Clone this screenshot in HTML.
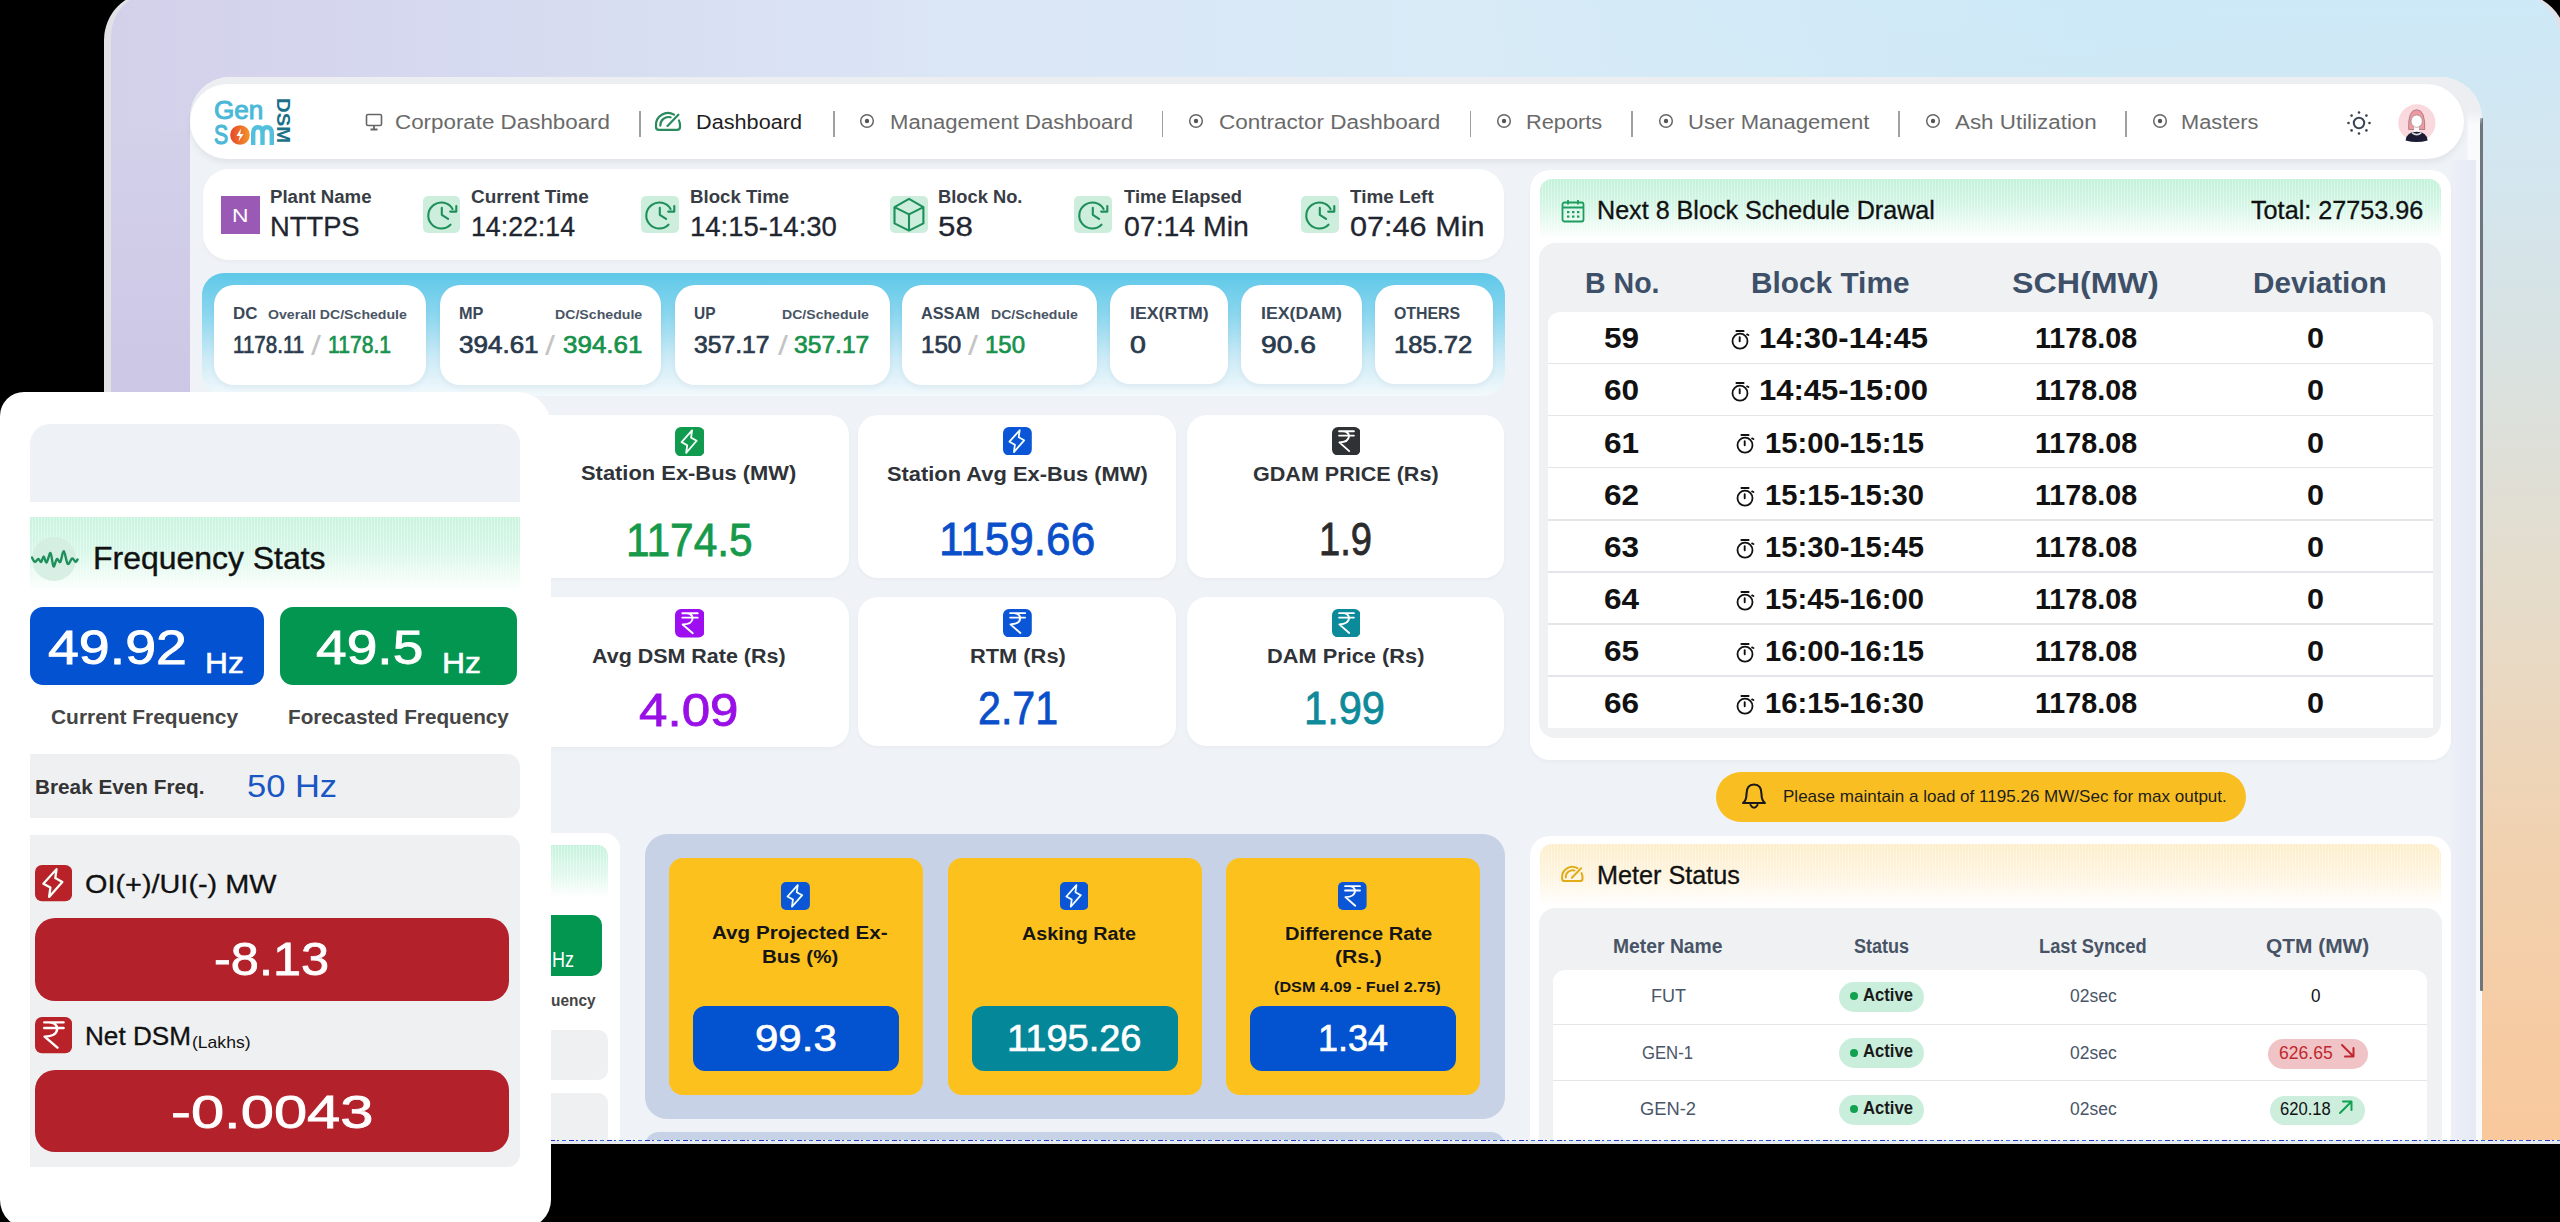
<!DOCTYPE html>
<html><head><meta charset="utf-8"><title>GenSom DSM Dashboard</title>
<style>
html,body{margin:0;padding:0;width:2560px;height:1222px;overflow:hidden;background:#000;font-family:'Liberation Sans', sans-serif;}
#root{position:relative;width:2560px;height:1222px;overflow:hidden;background:#000;}
</style></head><body><div id="root">
<div style="position:absolute;left:104px;top:-8px;width:2464px;height:1151px;border-radius:48px 54px 0 0;background:#e2e2e6;"></div>
<div style="position:absolute;left:111px;top:-8px;width:2450px;height:1151px;border-radius:44px 50px 0 0;background:linear-gradient(180deg,#cde9f8 0%,#d3e6ef 15%,#d8e2e2 30%,#e5dccb 52%,#f1d1af 75%,#f9c89c 100%);"></div>
<div style="position:absolute;left:111px;top:-8px;width:2450px;height:140px;border-radius:44px 50px 0 0;background:linear-gradient(90deg,#d3d0ea 0%,#d6daf0 15%,#dbe6f6 35%,#d8ebf7 55%,rgba(205,233,248,0.6) 80%,rgba(205,233,248,0) 100%);"></div>
<div style="position:absolute;left:111px;top:130px;width:79px;height:272px;background:linear-gradient(180deg,#d3d0ea 0%,#d0cce8 50%,#cbc7e4 100%);"></div>
<div style="position:absolute;left:190px;top:77px;width:2292px;height:1066px;border-radius:40px 42px 0 0;background:linear-gradient(90deg,#eff3f7 0%,#eff3f7 99.35%,#f8fafc 99.4%,#f8fafc 100%);"></div>
<div style="position:absolute;left:2480.0px;top:118.0px;width:2.5px;height:873.0px;background:#6f757c;border-radius:1px;"></div>
<div style="position:absolute;left:2451px;top:160px;width:25px;height:983px;background:linear-gradient(90deg,#edf0f7,#e6eaf5);"></div>
<div style="position:absolute;left:190px;top:77px;width:2292px;height:48px;border-radius:40px 42px 0 0;background:linear-gradient(180deg,#eceef1 0%,#eceef1 70%,rgba(236,238,241,0) 100%);"></div>
<div style="position:absolute;left:190px;top:84px;width:2274px;height:75px;border-radius:38px;background:#fff;box-shadow:0 4px 6px rgba(0,0,0,0.06);"></div>
<div style="position:absolute;left:213.8px;top:96.8px;white-space:nowrap;font-size:26px;line-height:26px;font-weight:400;color:#4bb8d8;transform:scaleX(1.0050);transform-origin:0 0;-webkit-text-stroke:1.0px #4bb8d8;">Gen</div>
<div style="position:absolute;left:213.8px;top:121.1px;white-space:nowrap;font-size:28px;line-height:28px;font-weight:400;color:#4bb8d8;transform:scaleX(0.7599);transform-origin:0 0;-webkit-text-stroke:1.2px #4bb8d8;">S</div>
<svg style="position:absolute;left:230.0px;top:125.0px;" width="20" height="20" viewBox="0 0 20 20"><defs><linearGradient id="lg1" x1="0" x2="1"><stop offset="0" stop-color="#e8452c"/><stop offset="1" stop-color="#f2962a"/></linearGradient></defs><circle cx="10" cy="10" r="9.8" fill="url(#lg1)"/><path d="M11 3.5 L6.5 11 L9.8 11 L8.5 16.5 L13.5 9 L10.2 9 Z" fill="#fff"/></svg>
<svg style="position:absolute;left:251.0px;top:125.0px;" width="23" height="20" viewBox="0 0 23 20"><path d="M2.2 20 V8.5 Q2.2 2.2 7.2 2.2 Q11.5 2.2 11.5 8.5 V20 M11.5 8.5 Q11.5 2.2 16 2.2 Q20.8 2.2 20.8 8.5 V20" fill="none" stroke="#52bfdc" stroke-width="4.4"/></svg>
<div style="position:absolute;left:275px;top:98px;width:16px;height:47px;writing-mode:vertical-rl;font-size:19px;line-height:16px;font-weight:700;color:#1a7089;letter-spacing:0px;transform:scaleY(1.07);transform-origin:0 0;">DSM</div>
<svg style="position:absolute;left:365.0px;top:113.0px;" width="18" height="19" viewBox="0 0 18 19"><rect x="1.5" y="1.5" width="15" height="11" rx="1.5" fill="none" stroke="#666" stroke-width="1.6"/><path d="M9 12.5 V16 M5.5 16.5 H12.5" stroke="#666" stroke-width="1.8"/></svg>
<div style="position:absolute;left:395.0px;top:111.8px;white-space:nowrap;font-size:20px;line-height:20px;font-weight:400;color:#6a6a6a;transform:scaleX(1.1178);transform-origin:0 0;">Corporate Dashboard</div>
<div style="position:absolute;left:639.2px;top:110.6px;width:1.5px;height:26.9px;background:#a0a0a0;border-radius:0px;"></div>
<svg style="position:absolute;left:650.0px;top:105.0px;" width="36" height="30" viewBox="0 0 36 30"><path d="M24 9.6 A12 12 0 0 0 6 20.5 V22 Q6 24.8 9 24.8 H27 Q30 24.8 30 22 V20.5 A12 12 0 0 0 28.9 15.4" fill="none" stroke="#2a8a5e" stroke-width="2.2" stroke-linecap="round" stroke-linejoin="round"/><path d="M20.6 12.3 A8.2 8.2 0 0 0 10.3 20.6" fill="none" stroke="#2a8a5e" stroke-width="2.2" stroke-linecap="round"/><path d="M17.5 20.9 L28.4 9.7" stroke="#2a8a5e" stroke-width="2.2" stroke-linecap="round"/></svg>
<div style="position:absolute;left:696.0px;top:111.8px;white-space:nowrap;font-size:20px;line-height:20px;font-weight:400;color:#1f1f1f;transform:scaleX(1.0834);transform-origin:0 0;">Dashboard</div>
<div style="position:absolute;left:833.0px;top:110.6px;width:1.5px;height:26.9px;background:#a0a0a0;border-radius:0px;"></div>
<svg style="position:absolute;left:859.0px;top:113.2px;" width="16" height="16" viewBox="0 0 16 16"><circle cx="8" cy="8" r="6.3" fill="none" stroke="#666" stroke-width="1.5"/><circle cx="8" cy="8" r="2.2" fill="#555"/></svg>
<div style="position:absolute;left:889.5px;top:111.8px;white-space:nowrap;font-size:20px;line-height:20px;font-weight:400;color:#6a6a6a;transform:scaleX(1.1038);transform-origin:0 0;">Management Dashboard</div>
<div style="position:absolute;left:1161.8px;top:110.6px;width:1.5px;height:26.9px;background:#a0a0a0;border-radius:0px;"></div>
<svg style="position:absolute;left:1188.0px;top:113.2px;" width="16" height="16" viewBox="0 0 16 16"><circle cx="8" cy="8" r="6.3" fill="none" stroke="#666" stroke-width="1.5"/><circle cx="8" cy="8" r="2.2" fill="#555"/></svg>
<div style="position:absolute;left:1218.8px;top:111.8px;white-space:nowrap;font-size:20px;line-height:20px;font-weight:400;color:#6a6a6a;transform:scaleX(1.1243);transform-origin:0 0;">Contractor Dashboard</div>
<div style="position:absolute;left:1469.8px;top:110.6px;width:1.5px;height:26.9px;background:#a0a0a0;border-radius:0px;"></div>
<svg style="position:absolute;left:1495.8px;top:113.2px;" width="16" height="16" viewBox="0 0 16 16"><circle cx="8" cy="8" r="6.3" fill="none" stroke="#666" stroke-width="1.5"/><circle cx="8" cy="8" r="2.2" fill="#555"/></svg>
<div style="position:absolute;left:1526.2px;top:111.8px;white-space:nowrap;font-size:20px;line-height:20px;font-weight:400;color:#6a6a6a;transform:scaleX(1.0888);transform-origin:0 0;">Reports</div>
<div style="position:absolute;left:1631.2px;top:110.6px;width:1.5px;height:26.9px;background:#a0a0a0;border-radius:0px;"></div>
<svg style="position:absolute;left:1658.0px;top:113.2px;" width="16" height="16" viewBox="0 0 16 16"><circle cx="8" cy="8" r="6.3" fill="none" stroke="#666" stroke-width="1.5"/><circle cx="8" cy="8" r="2.2" fill="#555"/></svg>
<div style="position:absolute;left:1688.0px;top:111.8px;white-space:nowrap;font-size:20px;line-height:20px;font-weight:400;color:#6a6a6a;transform:scaleX(1.1025);transform-origin:0 0;">User Management</div>
<div style="position:absolute;left:1898.0px;top:110.6px;width:1.5px;height:26.9px;background:#a0a0a0;border-radius:0px;"></div>
<svg style="position:absolute;left:1924.5px;top:113.2px;" width="16" height="16" viewBox="0 0 16 16"><circle cx="8" cy="8" r="6.3" fill="none" stroke="#666" stroke-width="1.5"/><circle cx="8" cy="8" r="2.2" fill="#555"/></svg>
<div style="position:absolute;left:1954.5px;top:111.8px;white-space:nowrap;font-size:20px;line-height:20px;font-weight:400;color:#6a6a6a;transform:scaleX(1.1186);transform-origin:0 0;">Ash Utilization</div>
<div style="position:absolute;left:2125.0px;top:110.6px;width:1.5px;height:26.9px;background:#a0a0a0;border-radius:0px;"></div>
<svg style="position:absolute;left:2151.5px;top:113.2px;" width="16" height="16" viewBox="0 0 16 16"><circle cx="8" cy="8" r="6.3" fill="none" stroke="#666" stroke-width="1.5"/><circle cx="8" cy="8" r="2.2" fill="#555"/></svg>
<div style="position:absolute;left:2181.2px;top:111.8px;white-space:nowrap;font-size:20px;line-height:20px;font-weight:400;color:#6a6a6a;transform:scaleX(1.0896);transform-origin:0 0;">Masters</div>
<svg style="position:absolute;left:2345.5px;top:109.5px;" width="26" height="26" viewBox="0 0 26 26"><circle cx="13" cy="13" r="5.2" fill="none" stroke="#3a4452" stroke-width="2"/><circle cx="23.50" cy="13.00" r="1.3" fill="#3a4452"/><circle cx="20.42" cy="20.42" r="1.3" fill="#3a4452"/><circle cx="13.00" cy="23.50" r="1.3" fill="#3a4452"/><circle cx="5.58" cy="20.42" r="1.3" fill="#3a4452"/><circle cx="2.50" cy="13.00" r="1.3" fill="#3a4452"/><circle cx="5.58" cy="5.58" r="1.3" fill="#3a4452"/><circle cx="13.00" cy="2.50" r="1.3" fill="#3a4452"/><circle cx="20.42" cy="5.58" r="1.3" fill="#3a4452"/></svg>
<svg style="position:absolute;left:2398.0px;top:103.5px;" width="38" height="38" viewBox="0 0 38 38"><circle cx="18.9" cy="18.9" r="18.6" fill="#f9d9dd"/><path d="M10.6 25.5 Q9.8 5.7 18.7 5.7 Q27.4 5.7 26.8 25.5 Z" fill="#ec9aa2" stroke="#7a4a55" stroke-width="0.5"/><rect x="16.1" y="22" width="4.9" height="7" fill="#fff"/><ellipse cx="18.7" cy="17.2" rx="5.6" ry="6.2" fill="#fdfdfd" stroke="#555" stroke-width="0.4"/><path d="M7.6 36.5 Q8.6 27.8 18.7 27.8 Q28.8 27.8 29.6 36.5 Q18.7 39.5 7.6 36.5 Z" fill="#1d1b33"/><path d="M14 28.6 Q18.7 32.6 23.4 28.6" fill="none" stroke="#d3dad8" stroke-width="1.6"/></svg>
<div style="position:absolute;left:202.6px;top:169.3px;width:1301px;height:91px;border-radius:26px;background:#fff;box-shadow:0 2px 4px rgba(0,0,0,0.03);"></div>
<div style="position:absolute;left:221.0px;top:195.6px;width:38.5px;height:38.1px;background:#9b59b6;border-radius:0px;"></div>
<div style="position:absolute;left:231.5px;top:205.9px;white-space:nowrap;font-size:19px;line-height:19px;font-weight:400;color:#fff;transform:scaleX(1.2014);transform-origin:0 0;">N</div>
<div style="position:absolute;left:269.7px;top:188.4px;white-space:nowrap;font-size:18px;line-height:18px;font-weight:700;color:#383d45;transform:scaleX(1.0362);transform-origin:0 0;">Plant Name</div>
<div style="position:absolute;left:269.7px;top:212.7px;white-space:nowrap;font-size:28px;line-height:28px;font-weight:400;color:#1f2630;transform:scaleX(0.9762);transform-origin:0 0;-webkit-text-stroke:0.3px #1f2630;">NTTPS</div>
<div style="position:absolute;left:422.7px;top:195.7px;width:37.8px;height:37.7px;background:#cdeedd;border-radius:5px;"></div>
<svg style="position:absolute;left:422.7px;top:195.7px;" width="38" height="38" viewBox="0 0 38 38"><path d="M29.56 13 A13 13 0 1 0 27.5 28.7" fill="none" stroke="#1e8f5a" stroke-width="2.1" stroke-linecap="round"/><path d="M33.3 10 V15.6 H27.2" fill="none" stroke="#1e8f5a" stroke-width="2.1" stroke-linecap="round" stroke-linejoin="round"/><path d="M18.8 11.9 V18.8 L25.1 22.9" fill="none" stroke="#1e8f5a" stroke-width="2.1" stroke-linecap="round" stroke-linejoin="round"/></svg>
<div style="position:absolute;left:471.2px;top:188.4px;white-space:nowrap;font-size:18px;line-height:18px;font-weight:700;color:#383d45;transform:scaleX(1.0537);transform-origin:0 0;">Current Time</div>
<div style="position:absolute;left:471.2px;top:212.7px;white-space:nowrap;font-size:28px;line-height:28px;font-weight:400;color:#1f2630;transform:scaleX(0.9541);transform-origin:0 0;-webkit-text-stroke:0.3px #1f2630;">14:22:14</div>
<div style="position:absolute;left:641.3px;top:195.7px;width:37.8px;height:37.7px;background:#cdeedd;border-radius:5px;"></div>
<svg style="position:absolute;left:641.3px;top:195.7px;" width="38" height="38" viewBox="0 0 38 38"><path d="M29.56 13 A13 13 0 1 0 27.5 28.7" fill="none" stroke="#1e8f5a" stroke-width="2.1" stroke-linecap="round"/><path d="M33.3 10 V15.6 H27.2" fill="none" stroke="#1e8f5a" stroke-width="2.1" stroke-linecap="round" stroke-linejoin="round"/><path d="M18.8 11.9 V18.8 L25.1 22.9" fill="none" stroke="#1e8f5a" stroke-width="2.1" stroke-linecap="round" stroke-linejoin="round"/></svg>
<div style="position:absolute;left:689.5px;top:188.4px;white-space:nowrap;font-size:18px;line-height:18px;font-weight:700;color:#383d45;transform:scaleX(1.0353);transform-origin:0 0;">Block Time</div>
<div style="position:absolute;left:689.5px;top:212.7px;white-space:nowrap;font-size:28px;line-height:28px;font-weight:400;color:#1f2630;transform:scaleX(0.9828);transform-origin:0 0;-webkit-text-stroke:0.3px #1f2630;">14:15-14:30</div>
<div style="position:absolute;left:889.8px;top:195.7px;width:37.8px;height:37.7px;background:#cdeedd;border-radius:5px;"></div>
<svg style="position:absolute;left:889.8px;top:195.7px;" width="38" height="38" viewBox="0 0 38 38"><path d="M19 2.9 L33.4 11.1 V27.4 L19 34.6 L4.5 27.4 V11.1 Z M4.5 11.1 L19 18.4 L33.4 11.1 M19 18.4 V34.6" fill="none" stroke="#1e8f5a" stroke-width="2.1" stroke-linejoin="round"/></svg>
<div style="position:absolute;left:938.0px;top:188.4px;white-space:nowrap;font-size:18px;line-height:18px;font-weight:700;color:#383d45;transform:scaleX(1.0167);transform-origin:0 0;">Block No.</div>
<div style="position:absolute;left:938.0px;top:212.7px;white-space:nowrap;font-size:28px;line-height:28px;font-weight:400;color:#1f2630;transform:scaleX(1.1170);transform-origin:0 0;-webkit-text-stroke:0.3px #1f2630;">58</div>
<div style="position:absolute;left:1074.4px;top:195.7px;width:37.8px;height:37.7px;background:#cdeedd;border-radius:5px;"></div>
<svg style="position:absolute;left:1074.4px;top:195.7px;" width="38" height="38" viewBox="0 0 38 38"><path d="M29.56 13 A13 13 0 1 0 27.5 28.7" fill="none" stroke="#1e8f5a" stroke-width="2.1" stroke-linecap="round"/><path d="M33.3 10 V15.6 H27.2" fill="none" stroke="#1e8f5a" stroke-width="2.1" stroke-linecap="round" stroke-linejoin="round"/><path d="M18.8 11.9 V18.8 L25.1 22.9" fill="none" stroke="#1e8f5a" stroke-width="2.1" stroke-linecap="round" stroke-linejoin="round"/></svg>
<div style="position:absolute;left:1124.0px;top:188.4px;white-space:nowrap;font-size:18px;line-height:18px;font-weight:700;color:#383d45;transform:scaleX(1.0197);transform-origin:0 0;">Time Elapsed</div>
<div style="position:absolute;left:1124.0px;top:212.7px;white-space:nowrap;font-size:28px;line-height:28px;font-weight:400;color:#1f2630;transform:scaleX(1.0157);transform-origin:0 0;-webkit-text-stroke:0.3px #1f2630;">07:14 Min</div>
<div style="position:absolute;left:1301.2px;top:195.7px;width:37.8px;height:37.7px;background:#cdeedd;border-radius:5px;"></div>
<svg style="position:absolute;left:1301.2px;top:195.7px;" width="38" height="38" viewBox="0 0 38 38"><path d="M29.56 13 A13 13 0 1 0 27.5 28.7" fill="none" stroke="#1e8f5a" stroke-width="2.1" stroke-linecap="round"/><path d="M33.3 10 V15.6 H27.2" fill="none" stroke="#1e8f5a" stroke-width="2.1" stroke-linecap="round" stroke-linejoin="round"/><path d="M18.8 11.9 V18.8 L25.1 22.9" fill="none" stroke="#1e8f5a" stroke-width="2.1" stroke-linecap="round" stroke-linejoin="round"/></svg>
<div style="position:absolute;left:1350.0px;top:188.4px;white-space:nowrap;font-size:18px;line-height:18px;font-weight:700;color:#383d45;transform:scaleX(1.0504);transform-origin:0 0;">Time Left</div>
<div style="position:absolute;left:1350.0px;top:212.7px;white-space:nowrap;font-size:28px;line-height:28px;font-weight:400;color:#1f2630;transform:scaleX(1.0938);transform-origin:0 0;-webkit-text-stroke:0.3px #1f2630;">07:46 Min</div>
<div style="position:absolute;left:201.6px;top:272.5px;width:1303.4px;height:123px;border-radius:22px;background:linear-gradient(180deg,#5ec8e8 0%,#8dd7ef 35%,#cdebf6 70%,#f3f9fc 100%);"></div>
<div style="position:absolute;left:213.75px;top:284.7px;width:212.2px;height:100.3px;border-radius:20px;background:#fff;box-shadow:0 3px 5px rgba(0,40,80,0.05);"></div>
<div style="position:absolute;left:439.7px;top:284.7px;width:221.6px;height:100.3px;border-radius:20px;background:#fff;box-shadow:0 3px 5px rgba(0,40,80,0.05);"></div>
<div style="position:absolute;left:675px;top:284.7px;width:214.5px;height:100.3px;border-radius:20px;background:#fff;box-shadow:0 3px 5px rgba(0,40,80,0.05);"></div>
<div style="position:absolute;left:901.5px;top:284.7px;width:195.9px;height:100.3px;border-radius:20px;background:#fff;box-shadow:0 3px 5px rgba(0,40,80,0.05);"></div>
<div style="position:absolute;left:1110.3px;top:284.7px;width:118.1px;height:98.9px;border-radius:20px;background:#fff;box-shadow:0 3px 5px rgba(0,40,80,0.05);"></div>
<div style="position:absolute;left:1240.9px;top:284.7px;width:121.5px;height:98.9px;border-radius:20px;background:#fff;box-shadow:0 3px 5px rgba(0,40,80,0.05);"></div>
<div style="position:absolute;left:1374.5px;top:284.7px;width:118.5px;height:98.9px;border-radius:20px;background:#fff;box-shadow:0 3px 5px rgba(0,40,80,0.05);"></div>
<div style="position:absolute;left:233.4px;top:305.4px;white-space:nowrap;font-size:16.5px;line-height:16.5px;font-weight:700;color:#3b4858;transform:scaleX(1.0233);transform-origin:0 0;">DC</div>
<div style="position:absolute;left:268.0px;top:308.0px;white-space:nowrap;font-size:13.5px;line-height:13.5px;font-weight:700;color:#4a5566;transform:scaleX(1.0458);transform-origin:0 0;">Overall DC/Schedule</div>
<div style="position:absolute;left:233.4px;top:334.1px;white-space:nowrap;font-size:23.5px;line-height:23.5px;font-weight:400;color:#2a3a4d;transform:scaleX(0.8752);transform-origin:0 0;-webkit-text-stroke:0.7px #2a3a4d;">1178.11</div>
<div style="position:absolute;left:311.0px;top:333.1px;white-space:nowrap;font-size:27px;line-height:27px;font-weight:400;color:#c4c4c4;transform:scaleX(1.3306);transform-origin:0 0;">/</div>
<div style="position:absolute;left:328.0px;top:334.1px;white-space:nowrap;font-size:23.5px;line-height:23.5px;font-weight:400;color:#17924c;transform:scaleX(0.8982);transform-origin:0 0;-webkit-text-stroke:0.7px #17924c;">1178.1</div>
<div style="position:absolute;left:459.4px;top:305.4px;white-space:nowrap;font-size:16.5px;line-height:16.5px;font-weight:700;color:#3b4858;transform:scaleX(0.9859);transform-origin:0 0;">MP</div>
<div style="position:absolute;left:555.0px;top:308.0px;white-space:nowrap;font-size:13.5px;line-height:13.5px;font-weight:700;color:#4a5566;transform:scaleX(1.0471);transform-origin:0 0;">DC/Schedule</div>
<div style="position:absolute;left:459.4px;top:334.1px;white-space:nowrap;font-size:23.5px;line-height:23.5px;font-weight:400;color:#2a3a4d;transform:scaleX(1.1072);transform-origin:0 0;-webkit-text-stroke:0.7px #2a3a4d;">394.61</div>
<div style="position:absolute;left:545.0px;top:333.1px;white-space:nowrap;font-size:27px;line-height:27px;font-weight:400;color:#c4c4c4;transform:scaleX(1.3306);transform-origin:0 0;">/</div>
<div style="position:absolute;left:562.5px;top:334.1px;white-space:nowrap;font-size:23.5px;line-height:23.5px;font-weight:400;color:#17924c;transform:scaleX(1.1058);transform-origin:0 0;-webkit-text-stroke:0.7px #17924c;">394.61</div>
<div style="position:absolute;left:694.4px;top:305.4px;white-space:nowrap;font-size:16.5px;line-height:16.5px;font-weight:700;color:#3b4858;transform:scaleX(0.9380);transform-origin:0 0;">UP</div>
<div style="position:absolute;left:782.4px;top:308.0px;white-space:nowrap;font-size:13.5px;line-height:13.5px;font-weight:700;color:#4a5566;transform:scaleX(1.0435);transform-origin:0 0;">DC/Schedule</div>
<div style="position:absolute;left:694.4px;top:334.1px;white-space:nowrap;font-size:23.5px;line-height:23.5px;font-weight:400;color:#2a3a4d;transform:scaleX(1.0516);transform-origin:0 0;-webkit-text-stroke:0.7px #2a3a4d;">357.17</div>
<div style="position:absolute;left:778.0px;top:333.1px;white-space:nowrap;font-size:27px;line-height:27px;font-weight:400;color:#c4c4c4;transform:scaleX(1.3306);transform-origin:0 0;">/</div>
<div style="position:absolute;left:793.7px;top:334.1px;white-space:nowrap;font-size:23.5px;line-height:23.5px;font-weight:400;color:#17924c;transform:scaleX(1.0474);transform-origin:0 0;-webkit-text-stroke:0.7px #17924c;">357.17</div>
<div style="position:absolute;left:921.3px;top:305.4px;white-space:nowrap;font-size:16.5px;line-height:16.5px;font-weight:700;color:#3b4858;transform:scaleX(0.9850);transform-origin:0 0;">ASSAM</div>
<div style="position:absolute;left:990.9px;top:308.0px;white-space:nowrap;font-size:13.5px;line-height:13.5px;font-weight:700;color:#4a5566;transform:scaleX(1.0423);transform-origin:0 0;">DC/Schedule</div>
<div style="position:absolute;left:921.3px;top:334.1px;white-space:nowrap;font-size:23.5px;line-height:23.5px;font-weight:400;color:#2a3a4d;transform:scaleX(1.0276);transform-origin:0 0;-webkit-text-stroke:0.7px #2a3a4d;">150</div>
<div style="position:absolute;left:968.0px;top:333.1px;white-space:nowrap;font-size:27px;line-height:27px;font-weight:400;color:#c4c4c4;transform:scaleX(1.3306);transform-origin:0 0;">/</div>
<div style="position:absolute;left:985.2px;top:334.1px;white-space:nowrap;font-size:23.5px;line-height:23.5px;font-weight:400;color:#17924c;transform:scaleX(1.0199);transform-origin:0 0;-webkit-text-stroke:0.7px #17924c;">150</div>
<div style="position:absolute;left:1129.9px;top:304.6px;white-space:nowrap;font-size:16.5px;line-height:16.5px;font-weight:700;color:#3b4858;transform:scaleX(1.0733);transform-origin:0 0;">IEX(RTM)</div>
<div style="position:absolute;left:1130.0px;top:333.6px;white-space:nowrap;font-size:23.5px;line-height:23.5px;font-weight:400;color:#2a3a4d;transform:scaleX(1.2158);transform-origin:0 0;-webkit-text-stroke:0.7px #2a3a4d;">0</div>
<div style="position:absolute;left:1261.0px;top:304.6px;white-space:nowrap;font-size:16.5px;line-height:16.5px;font-weight:700;color:#3b4858;transform:scaleX(1.0749);transform-origin:0 0;">IEX(DAM)</div>
<div style="position:absolute;left:1261.0px;top:333.6px;white-space:nowrap;font-size:23.5px;line-height:23.5px;font-weight:400;color:#2a3a4d;transform:scaleX(1.2022);transform-origin:0 0;-webkit-text-stroke:0.7px #2a3a4d;">90.6</div>
<div style="position:absolute;left:1394.2px;top:304.6px;white-space:nowrap;font-size:16.5px;line-height:16.5px;font-weight:700;color:#3b4858;transform:scaleX(0.9627);transform-origin:0 0;">OTHERS</div>
<div style="position:absolute;left:1394.2px;top:333.6px;white-space:nowrap;font-size:23.5px;line-height:23.5px;font-weight:400;color:#2a3a4d;transform:scaleX(1.0878);transform-origin:0 0;-webkit-text-stroke:0.7px #2a3a4d;">185.72</div>
<div style="position:absolute;left:530px;top:414.8px;width:318.6px;height:163.2px;border-radius:20px;background:#fff;box-shadow:0 2px 4px rgba(0,0,0,0.03);"></div>
<div style="position:absolute;left:858.3px;top:415.3px;width:317.6px;height:162.4px;border-radius:20px;background:#fff;box-shadow:0 2px 4px rgba(0,0,0,0.03);"></div>
<div style="position:absolute;left:1187px;top:415.3px;width:317.4px;height:162.4px;border-radius:20px;background:#fff;box-shadow:0 2px 4px rgba(0,0,0,0.03);"></div>
<div style="position:absolute;left:530px;top:596.8px;width:318.6px;height:150.3px;border-radius:20px;background:#fff;box-shadow:0 2px 4px rgba(0,0,0,0.03);"></div>
<div style="position:absolute;left:858.3px;top:596.8px;width:317.6px;height:149.4px;border-radius:20px;background:#fff;box-shadow:0 2px 4px rgba(0,0,0,0.03);"></div>
<div style="position:absolute;left:1187px;top:596.8px;width:317.4px;height:149.4px;border-radius:20px;background:#fff;box-shadow:0 2px 4px rgba(0,0,0,0.03);"></div>
<svg style="position:absolute;left:674.5px;top:426.7px;" width="29.5" height="29.3" viewBox="0 0 29.5 29.3"><rect x="0" y="0" width="29.5" height="29.3" rx="6" fill="#109b4e"/><g transform="scale(1.017,1.010)"><path d="M16.8 3.3 L6.5 15 L12 18.1 L11 25.6 L21.3 13.6 L15.8 10.5 Z" fill="none" stroke="#f4fff9" stroke-width="1.8" stroke-linejoin="round"/></g></svg>
<div style="position:absolute;left:581.2px;top:464.3px;white-space:nowrap;font-size:19.5px;line-height:19.5px;font-weight:700;color:#2f3338;transform:scaleX(1.1229);transform-origin:0 0;">Station Ex-Bus (MW)</div>
<div style="position:absolute;left:625.5px;top:516.6px;white-space:nowrap;font-size:46px;line-height:46px;font-weight:400;color:#16994a;transform:scaleX(0.9229);transform-origin:0 0;-webkit-text-stroke:0.8px #16994a;">1174.5</div>
<svg style="position:absolute;left:1003.0px;top:427.0px;" width="28.8" height="28.4" viewBox="0 0 28.8 28.4"><rect x="0" y="0" width="28.8" height="28.4" rx="6" fill="#0a56d6"/><g transform="scale(0.993,0.979)"><path d="M16.8 3.3 L6.5 15 L12 18.1 L11 25.6 L21.3 13.6 L15.8 10.5 Z" fill="none" stroke="#f4fff9" stroke-width="1.8" stroke-linejoin="round"/></g></svg>
<div style="position:absolute;left:886.6px;top:464.5px;white-space:nowrap;font-size:19.5px;line-height:19.5px;font-weight:700;color:#2f3338;transform:scaleX(1.1211);transform-origin:0 0;">Station Avg Ex-Bus (MW)</div>
<div style="position:absolute;left:938.7px;top:516.4px;white-space:nowrap;font-size:46px;line-height:46px;font-weight:400;color:#0a4fc9;transform:scaleX(0.9590);transform-origin:0 0;-webkit-text-stroke:0.8px #0a4fc9;">1159.66</div>
<svg style="position:absolute;left:1331.5px;top:427.0px;" width="28.5" height="28.4" viewBox="0 0 28.5 28.4"><rect x="0" y="0" width="28.5" height="28.4" rx="6" fill="#2f3235"/><g transform="scale(0.983,0.979)"><path d="M7.2 4.3 H22.3 M7.2 8.8 H22.3 M11 4.3 Q17.3 4.6 17.3 9.6 Q16.8 15.5 7.5 15.7 L17.5 24.6" fill="none" stroke="#fff" stroke-width="1.9" stroke-linecap="round" stroke-linejoin="round"/></g></svg>
<div style="position:absolute;left:1252.5px;top:464.5px;white-space:nowrap;font-size:19.5px;line-height:19.5px;font-weight:700;color:#2f3338;transform:scaleX(1.1053);transform-origin:0 0;">GDAM PRICE (Rs)</div>
<div style="position:absolute;left:1318.8px;top:516.4px;white-space:nowrap;font-size:46px;line-height:46px;font-weight:400;color:#2b2b2b;transform:scaleX(0.8287);transform-origin:0 0;-webkit-text-stroke:0.8px #2b2b2b;">1.9</div>
<svg style="position:absolute;left:674.5px;top:609.2px;" width="29.5" height="28.6" viewBox="0 0 29.5 28.6"><rect x="0" y="0" width="29.5" height="28.6" rx="6" fill="#9d0ff0"/><g transform="scale(1.017,0.986)"><path d="M7.2 4.3 H22.3 M7.2 8.8 H22.3 M11 4.3 Q17.3 4.6 17.3 9.6 Q16.8 15.5 7.5 15.7 L17.5 24.6" fill="none" stroke="#fff" stroke-width="1.9" stroke-linecap="round" stroke-linejoin="round"/></g></svg>
<div style="position:absolute;left:592.0px;top:646.7px;white-space:nowrap;font-size:19.5px;line-height:19.5px;font-weight:700;color:#2f3338;transform:scaleX(1.1007);transform-origin:0 0;">Avg DSM Rate (Rs)</div>
<div style="position:absolute;left:638.7px;top:686.5px;white-space:nowrap;font-size:46px;line-height:46px;font-weight:400;color:#9810e6;transform:scaleX(1.1113);transform-origin:0 0;-webkit-text-stroke:0.8px #9810e6;">4.09</div>
<svg style="position:absolute;left:1003.0px;top:609.2px;" width="28.8" height="28.3" viewBox="0 0 28.8 28.3"><rect x="0" y="0" width="28.8" height="28.3" rx="6" fill="#0a56d6"/><g transform="scale(0.993,0.976)"><path d="M7.2 4.3 H22.3 M7.2 8.8 H22.3 M11 4.3 Q17.3 4.6 17.3 9.6 Q16.8 15.5 7.5 15.7 L17.5 24.6" fill="none" stroke="#fff" stroke-width="1.9" stroke-linecap="round" stroke-linejoin="round"/></g></svg>
<div style="position:absolute;left:969.6px;top:646.6px;white-space:nowrap;font-size:19.5px;line-height:19.5px;font-weight:700;color:#2f3338;transform:scaleX(1.1194);transform-origin:0 0;">RTM (Rs)</div>
<div style="position:absolute;left:977.9px;top:685.2px;white-space:nowrap;font-size:46px;line-height:46px;font-weight:400;color:#0a4fc9;transform:scaleX(0.8947);transform-origin:0 0;-webkit-text-stroke:0.8px #0a4fc9;">2.71</div>
<svg style="position:absolute;left:1331.5px;top:609.2px;" width="28.5" height="28.3" viewBox="0 0 28.5 28.3"><rect x="0" y="0" width="28.5" height="28.3" rx="6" fill="#0b8a9a"/><g transform="scale(0.983,0.976)"><path d="M7.2 4.3 H22.3 M7.2 8.8 H22.3 M11 4.3 Q17.3 4.6 17.3 9.6 Q16.8 15.5 7.5 15.7 L17.5 24.6" fill="none" stroke="#fff" stroke-width="1.9" stroke-linecap="round" stroke-linejoin="round"/></g></svg>
<div style="position:absolute;left:1266.6px;top:646.5px;white-space:nowrap;font-size:19.5px;line-height:19.5px;font-weight:700;color:#2f3338;transform:scaleX(1.1173);transform-origin:0 0;">DAM Price (Rs)</div>
<div style="position:absolute;left:1304.0px;top:685.1px;white-space:nowrap;font-size:46px;line-height:46px;font-weight:400;color:#0e8a9a;transform:scaleX(0.9047);transform-origin:0 0;-webkit-text-stroke:0.8px #0e8a9a;">1.99</div>
<div style="position:absolute;left:330px;top:833.4px;width:290px;height:320px;border-radius:16px;background:#fff;"></div>
<div style="position:absolute;left:340px;top:844.8px;width:267.7px;height:52px;border-radius:10px 10px 0 0;background:repeating-linear-gradient(90deg,rgba(255,255,255,0) 0 2px,rgba(255,255,255,0.35) 2px 3px),linear-gradient(180deg,#c6f3dd 0%,#e3f9ee 60%,#ffffff 100%);"></div>
<div style="position:absolute;left:350.0px;top:915.0px;width:252.0px;height:61.3px;background:#039651;border-radius:10px;"></div>
<div style="position:absolute;left:552.0px;top:948.9px;white-space:nowrap;font-size:22px;line-height:22px;font-weight:400;color:#fff;transform:scaleX(0.8181);transform-origin:0 0;">Hz</div>
<div style="position:absolute;left:551.0px;top:992.3px;white-space:nowrap;font-size:17px;line-height:17px;font-weight:700;color:#454545;transform:scaleX(0.9076);transform-origin:0 0;">uency</div>
<div style="position:absolute;left:340.0px;top:1029.6px;width:267.7px;height:50.7px;background:#eff0f2;border-radius:10px;"></div>
<div style="position:absolute;left:340.0px;top:1092.7px;width:267.7px;height:67.3px;background:#eff0f2;border-radius:10px;"></div>
<div style="position:absolute;left:644.9px;top:833.5px;width:859.7px;height:285.7px;background:#c7d2e6;border-radius:22px;"></div>
<div style="position:absolute;left:645.0px;top:1132.0px;width:860.0px;height:28.0px;background:#c7d2e6;border-radius:22px;"></div>
<div style="position:absolute;left:669.2px;top:857.8px;width:253.8px;height:237.5px;background:#fdc11e;border-radius:14px;"></div>
<div style="position:absolute;left:947.6px;top:857.8px;width:254.3px;height:237.5px;background:#fdc11e;border-radius:14px;"></div>
<div style="position:absolute;left:1226.2px;top:857.8px;width:254.3px;height:237.5px;background:#fdc11e;border-radius:14px;"></div>
<svg style="position:absolute;left:780.7px;top:882.0px;" width="28.9" height="28" viewBox="0 0 28.9 28"><rect x="0" y="0" width="28.9" height="28" rx="5" fill="#0a56d6"/><g transform="scale(0.997,0.966)"><path d="M16.8 3.3 L6.5 15 L12 18.1 L11 25.6 L21.3 13.6 L15.8 10.5 Z" fill="none" stroke="#f4fff9" stroke-width="1.8" stroke-linejoin="round"/></g></svg>
<svg style="position:absolute;left:1060.0px;top:882.0px;" width="28.4" height="28" viewBox="0 0 28.4 28"><rect x="0" y="0" width="28.4" height="28" rx="5" fill="#0a56d6"/><g transform="scale(0.979,0.966)"><path d="M16.8 3.3 L6.5 15 L12 18.1 L11 25.6 L21.3 13.6 L15.8 10.5 Z" fill="none" stroke="#f4fff9" stroke-width="1.8" stroke-linejoin="round"/></g></svg>
<svg style="position:absolute;left:1338.4px;top:882.0px;" width="28.6" height="28" viewBox="0 0 28.6 28"><rect x="0" y="0" width="28.6" height="28" rx="5" fill="#0a56d6"/><g transform="scale(0.986,0.966)"><path d="M7.2 4.3 H22.3 M7.2 8.8 H22.3 M11 4.3 Q17.3 4.6 17.3 9.6 Q16.8 15.5 7.5 15.7 L17.5 24.6" fill="none" stroke="#fff" stroke-width="1.9" stroke-linecap="round" stroke-linejoin="round"/></g></svg>
<div style="position:absolute;left:712.4px;top:924.2px;white-space:nowrap;font-size:18px;line-height:18px;font-weight:700;color:#151515;transform:scaleX(1.1448);transform-origin:0 0;">Avg Projected Ex-</div>
<div style="position:absolute;left:762.3px;top:947.8px;white-space:nowrap;font-size:18px;line-height:18px;font-weight:700;color:#151515;transform:scaleX(1.1373);transform-origin:0 0;">Bus (%)</div>
<div style="position:absolute;left:1022.0px;top:925.0px;white-space:nowrap;font-size:18px;line-height:18px;font-weight:700;color:#151515;transform:scaleX(1.0968);transform-origin:0 0;">Asking Rate</div>
<div style="position:absolute;left:1284.6px;top:924.8px;white-space:nowrap;font-size:18px;line-height:18px;font-weight:700;color:#151515;transform:scaleX(1.1148);transform-origin:0 0;">Difference Rate</div>
<div style="position:absolute;left:1334.6px;top:947.8px;white-space:nowrap;font-size:18px;line-height:18px;font-weight:700;color:#151515;transform:scaleX(1.1725);transform-origin:0 0;">(Rs.)</div>
<div style="position:absolute;left:1274.4px;top:979.1px;white-space:nowrap;font-size:15.5px;line-height:15.5px;font-weight:700;color:#151515;transform:scaleX(1.0454);transform-origin:0 0;">(DSM 4.09 - Fuel 2.75)</div>
<div style="position:absolute;left:693.0px;top:1006.3px;width:206.2px;height:64.7px;background:#0352d0;border-radius:12px;"></div>
<div style="position:absolute;left:971.7px;top:1006.3px;width:206.1px;height:64.7px;background:#05879a;border-radius:12px;"></div>
<div style="position:absolute;left:1250.0px;top:1006.3px;width:206.4px;height:64.7px;background:#0352d0;border-radius:12px;"></div>
<div style="position:absolute;left:754.8px;top:1020.4px;white-space:nowrap;font-size:37px;line-height:37px;font-weight:400;color:#fff;transform:scaleX(1.1359);transform-origin:0 0;-webkit-text-stroke:0.7px #fff;">99.3</div>
<div style="position:absolute;left:1007.2px;top:1020.4px;white-space:nowrap;font-size:37px;line-height:37px;font-weight:400;color:#fff;transform:scaleX(1.0267);transform-origin:0 0;-webkit-text-stroke:0.7px #fff;">1195.26</div>
<div style="position:absolute;left:1318.0px;top:1020.4px;white-space:nowrap;font-size:37px;line-height:37px;font-weight:400;color:#fff;transform:scaleX(0.9706);transform-origin:0 0;-webkit-text-stroke:0.7px #fff;">1.34</div>
<div style="position:absolute;left:1529.6px;top:169.6px;width:921px;height:590.7px;border-radius:20px;background:#fff;box-shadow:0 2px 4px rgba(0,0,0,0.03);"></div>
<div style="position:absolute;left:1539.6px;top:178.7px;width:901.4px;height:60px;border-radius:12px 12px 0 0;background:repeating-linear-gradient(90deg,rgba(255,255,255,0) 0 2px,rgba(255,255,255,0.35) 2px 3px),linear-gradient(180deg,#c2f2da 0%,#d5f6e6 45%,#ffffff 100%);"></div>
<svg style="position:absolute;left:1560.5px;top:198.5px;" width="24" height="24" viewBox="0 0 24 24"><rect x="1.5" y="3.5" width="21" height="19" rx="2" fill="none" stroke="#1e9e5e" stroke-width="1.8"/><path d="M1.5 8.5 H22.5 M7 1 V5.5 M17 1 V5.5" stroke="#1e9e5e" stroke-width="1.8"/><g fill="#1e9e5e"><rect x="6" y="12" width="2.4" height="2.2"/><rect x="11" y="12" width="2.4" height="2.2"/><rect x="16" y="12" width="2.4" height="2.2"/><rect x="6" y="16.5" width="2.4" height="2.2"/><rect x="11" y="16.5" width="2.4" height="2.2"/><rect x="16" y="16.5" width="2.4" height="2.2"/></g></svg>
<div style="position:absolute;left:1597.0px;top:198.4px;white-space:nowrap;font-size:25px;line-height:25px;font-weight:400;color:#111;transform:scaleX(1.0048);transform-origin:0 0;-webkit-text-stroke:0.3px #111;">Next 8 Block Schedule Drawal</div>
<div style="position:absolute;left:2250.6px;top:198.4px;white-space:nowrap;font-size:25px;line-height:25px;font-weight:400;color:#111;transform:scaleX(1.0083);transform-origin:0 0;-webkit-text-stroke:0.3px #111;">Total: 27753.96</div>
<div style="position:absolute;left:1539.0px;top:243.0px;width:902.0px;height:495.0px;background:#eff1f3;border-radius:16px;"></div>
<div style="position:absolute;left:1584.9px;top:268.2px;white-space:nowrap;font-size:30px;line-height:30px;font-weight:700;color:#3e5068;transform:scaleX(0.9511);transform-origin:0 0;">B No.</div>
<div style="position:absolute;left:1750.9px;top:268.2px;white-space:nowrap;font-size:30px;line-height:30px;font-weight:700;color:#3e5068;transform:scaleX(0.9936);transform-origin:0 0;">Block Time</div>
<div style="position:absolute;left:2012.3px;top:268.2px;white-space:nowrap;font-size:30px;line-height:30px;font-weight:700;color:#3e5068;transform:scaleX(1.0736);transform-origin:0 0;">SCH(MW)</div>
<div style="position:absolute;left:2253.2px;top:268.2px;white-space:nowrap;font-size:30px;line-height:30px;font-weight:700;color:#3e5068;transform:scaleX(0.9894);transform-origin:0 0;">Deviation</div>
<div style="position:absolute;left:1548.3px;top:312.0px;width:884.3px;height:416.3px;background:#fff;border-radius:12px 12px 0 0;"></div>
<div style="position:absolute;left:1548.3px;top:362.7px;width:884.3px;height:1.5px;background:#e3e5e8;border-radius:0px;"></div>
<div style="position:absolute;left:1604.0px;top:323.3px;white-space:nowrap;font-size:29.5px;line-height:29.5px;font-weight:700;color:#111;transform:scaleX(1.0692);transform-origin:0 0;">59</div>
<svg style="position:absolute;left:1730.0px;top:329.2px;" width="22" height="22" viewBox="0 0 22 22"><circle cx="10" cy="12.2" r="7.5" fill="none" stroke="#111" stroke-width="1.8"/><path d="M6.4 2 H13.6 M9.7 8.2 V12.2 M17.1 5.4 L18.4 6" stroke="#111" stroke-width="1.9" stroke-linecap="round"/></svg>
<div style="position:absolute;left:1759.4px;top:323.3px;white-space:nowrap;font-size:29.5px;line-height:29.5px;font-weight:700;color:#111;transform:scaleX(1.0520);transform-origin:0 0;">14:30-14:45</div>
<div style="position:absolute;left:2034.7px;top:323.3px;white-space:nowrap;font-size:29.5px;line-height:29.5px;font-weight:700;color:#111;transform:scaleX(0.9722);transform-origin:0 0;">1178.08</div>
<div style="position:absolute;left:2307.0px;top:323.3px;white-space:nowrap;font-size:29.5px;line-height:29.5px;font-weight:700;color:#111;transform:scaleX(1.0352);transform-origin:0 0;">0</div>
<div style="position:absolute;left:1548.3px;top:414.8px;width:884.3px;height:1.5px;background:#e3e5e8;border-radius:0px;"></div>
<div style="position:absolute;left:1604.0px;top:375.4px;white-space:nowrap;font-size:29.5px;line-height:29.5px;font-weight:700;color:#111;transform:scaleX(1.0692);transform-origin:0 0;">60</div>
<svg style="position:absolute;left:1730.0px;top:381.3px;" width="22" height="22" viewBox="0 0 22 22"><circle cx="10" cy="12.2" r="7.5" fill="none" stroke="#111" stroke-width="1.8"/><path d="M6.4 2 H13.6 M9.7 8.2 V12.2 M17.1 5.4 L18.4 6" stroke="#111" stroke-width="1.9" stroke-linecap="round"/></svg>
<div style="position:absolute;left:1759.4px;top:375.4px;white-space:nowrap;font-size:29.5px;line-height:29.5px;font-weight:700;color:#111;transform:scaleX(1.0520);transform-origin:0 0;">14:45-15:00</div>
<div style="position:absolute;left:2034.7px;top:375.4px;white-space:nowrap;font-size:29.5px;line-height:29.5px;font-weight:700;color:#111;transform:scaleX(0.9722);transform-origin:0 0;">1178.08</div>
<div style="position:absolute;left:2307.0px;top:375.4px;white-space:nowrap;font-size:29.5px;line-height:29.5px;font-weight:700;color:#111;transform:scaleX(1.0352);transform-origin:0 0;">0</div>
<div style="position:absolute;left:1548.3px;top:466.9px;width:884.3px;height:1.5px;background:#e3e5e8;border-radius:0px;"></div>
<div style="position:absolute;left:1604.0px;top:427.5px;white-space:nowrap;font-size:29.5px;line-height:29.5px;font-weight:700;color:#111;transform:scaleX(1.0692);transform-origin:0 0;">61</div>
<svg style="position:absolute;left:1735.1px;top:433.4px;" width="22" height="22" viewBox="0 0 22 22"><circle cx="10" cy="12.2" r="7.5" fill="none" stroke="#111" stroke-width="1.8"/><path d="M6.4 2 H13.6 M9.7 8.2 V12.2 M17.1 5.4 L18.4 6" stroke="#111" stroke-width="1.9" stroke-linecap="round"/></svg>
<div style="position:absolute;left:1764.5px;top:427.5px;white-space:nowrap;font-size:29.5px;line-height:29.5px;font-weight:700;color:#111;transform:scaleX(0.9892);transform-origin:0 0;">15:00-15:15</div>
<div style="position:absolute;left:2034.7px;top:427.5px;white-space:nowrap;font-size:29.5px;line-height:29.5px;font-weight:700;color:#111;transform:scaleX(0.9722);transform-origin:0 0;">1178.08</div>
<div style="position:absolute;left:2307.0px;top:427.5px;white-space:nowrap;font-size:29.5px;line-height:29.5px;font-weight:700;color:#111;transform:scaleX(1.0352);transform-origin:0 0;">0</div>
<div style="position:absolute;left:1548.3px;top:519.0px;width:884.3px;height:1.5px;background:#e3e5e8;border-radius:0px;"></div>
<div style="position:absolute;left:1604.0px;top:479.6px;white-space:nowrap;font-size:29.5px;line-height:29.5px;font-weight:700;color:#111;transform:scaleX(1.0692);transform-origin:0 0;">62</div>
<svg style="position:absolute;left:1735.1px;top:485.5px;" width="22" height="22" viewBox="0 0 22 22"><circle cx="10" cy="12.2" r="7.5" fill="none" stroke="#111" stroke-width="1.8"/><path d="M6.4 2 H13.6 M9.7 8.2 V12.2 M17.1 5.4 L18.4 6" stroke="#111" stroke-width="1.9" stroke-linecap="round"/></svg>
<div style="position:absolute;left:1764.5px;top:479.6px;white-space:nowrap;font-size:29.5px;line-height:29.5px;font-weight:700;color:#111;transform:scaleX(0.9892);transform-origin:0 0;">15:15-15:30</div>
<div style="position:absolute;left:2034.7px;top:479.6px;white-space:nowrap;font-size:29.5px;line-height:29.5px;font-weight:700;color:#111;transform:scaleX(0.9722);transform-origin:0 0;">1178.08</div>
<div style="position:absolute;left:2307.0px;top:479.6px;white-space:nowrap;font-size:29.5px;line-height:29.5px;font-weight:700;color:#111;transform:scaleX(1.0352);transform-origin:0 0;">0</div>
<div style="position:absolute;left:1548.3px;top:571.1px;width:884.3px;height:1.5px;background:#e3e5e8;border-radius:0px;"></div>
<div style="position:absolute;left:1604.0px;top:531.7px;white-space:nowrap;font-size:29.5px;line-height:29.5px;font-weight:700;color:#111;transform:scaleX(1.0692);transform-origin:0 0;">63</div>
<svg style="position:absolute;left:1735.1px;top:537.6px;" width="22" height="22" viewBox="0 0 22 22"><circle cx="10" cy="12.2" r="7.5" fill="none" stroke="#111" stroke-width="1.8"/><path d="M6.4 2 H13.6 M9.7 8.2 V12.2 M17.1 5.4 L18.4 6" stroke="#111" stroke-width="1.9" stroke-linecap="round"/></svg>
<div style="position:absolute;left:1764.5px;top:531.7px;white-space:nowrap;font-size:29.5px;line-height:29.5px;font-weight:700;color:#111;transform:scaleX(0.9892);transform-origin:0 0;">15:30-15:45</div>
<div style="position:absolute;left:2034.7px;top:531.7px;white-space:nowrap;font-size:29.5px;line-height:29.5px;font-weight:700;color:#111;transform:scaleX(0.9722);transform-origin:0 0;">1178.08</div>
<div style="position:absolute;left:2307.0px;top:531.7px;white-space:nowrap;font-size:29.5px;line-height:29.5px;font-weight:700;color:#111;transform:scaleX(1.0352);transform-origin:0 0;">0</div>
<div style="position:absolute;left:1548.3px;top:623.2px;width:884.3px;height:1.5px;background:#e3e5e8;border-radius:0px;"></div>
<div style="position:absolute;left:1604.0px;top:583.8px;white-space:nowrap;font-size:29.5px;line-height:29.5px;font-weight:700;color:#111;transform:scaleX(1.0692);transform-origin:0 0;">64</div>
<svg style="position:absolute;left:1735.1px;top:589.7px;" width="22" height="22" viewBox="0 0 22 22"><circle cx="10" cy="12.2" r="7.5" fill="none" stroke="#111" stroke-width="1.8"/><path d="M6.4 2 H13.6 M9.7 8.2 V12.2 M17.1 5.4 L18.4 6" stroke="#111" stroke-width="1.9" stroke-linecap="round"/></svg>
<div style="position:absolute;left:1764.5px;top:583.8px;white-space:nowrap;font-size:29.5px;line-height:29.5px;font-weight:700;color:#111;transform:scaleX(0.9892);transform-origin:0 0;">15:45-16:00</div>
<div style="position:absolute;left:2034.7px;top:583.8px;white-space:nowrap;font-size:29.5px;line-height:29.5px;font-weight:700;color:#111;transform:scaleX(0.9722);transform-origin:0 0;">1178.08</div>
<div style="position:absolute;left:2307.0px;top:583.8px;white-space:nowrap;font-size:29.5px;line-height:29.5px;font-weight:700;color:#111;transform:scaleX(1.0352);transform-origin:0 0;">0</div>
<div style="position:absolute;left:1548.3px;top:675.3px;width:884.3px;height:1.5px;background:#e3e5e8;border-radius:0px;"></div>
<div style="position:absolute;left:1604.0px;top:635.9px;white-space:nowrap;font-size:29.5px;line-height:29.5px;font-weight:700;color:#111;transform:scaleX(1.0692);transform-origin:0 0;">65</div>
<svg style="position:absolute;left:1735.1px;top:641.8px;" width="22" height="22" viewBox="0 0 22 22"><circle cx="10" cy="12.2" r="7.5" fill="none" stroke="#111" stroke-width="1.8"/><path d="M6.4 2 H13.6 M9.7 8.2 V12.2 M17.1 5.4 L18.4 6" stroke="#111" stroke-width="1.9" stroke-linecap="round"/></svg>
<div style="position:absolute;left:1764.5px;top:635.9px;white-space:nowrap;font-size:29.5px;line-height:29.5px;font-weight:700;color:#111;transform:scaleX(0.9892);transform-origin:0 0;">16:00-16:15</div>
<div style="position:absolute;left:2034.7px;top:635.9px;white-space:nowrap;font-size:29.5px;line-height:29.5px;font-weight:700;color:#111;transform:scaleX(0.9722);transform-origin:0 0;">1178.08</div>
<div style="position:absolute;left:2307.0px;top:635.9px;white-space:nowrap;font-size:29.5px;line-height:29.5px;font-weight:700;color:#111;transform:scaleX(1.0352);transform-origin:0 0;">0</div>
<div style="position:absolute;left:1604.0px;top:688.0px;white-space:nowrap;font-size:29.5px;line-height:29.5px;font-weight:700;color:#111;transform:scaleX(1.0692);transform-origin:0 0;">66</div>
<svg style="position:absolute;left:1735.1px;top:693.9px;" width="22" height="22" viewBox="0 0 22 22"><circle cx="10" cy="12.2" r="7.5" fill="none" stroke="#111" stroke-width="1.8"/><path d="M6.4 2 H13.6 M9.7 8.2 V12.2 M17.1 5.4 L18.4 6" stroke="#111" stroke-width="1.9" stroke-linecap="round"/></svg>
<div style="position:absolute;left:1764.5px;top:688.0px;white-space:nowrap;font-size:29.5px;line-height:29.5px;font-weight:700;color:#111;transform:scaleX(0.9892);transform-origin:0 0;">16:15-16:30</div>
<div style="position:absolute;left:2034.7px;top:688.0px;white-space:nowrap;font-size:29.5px;line-height:29.5px;font-weight:700;color:#111;transform:scaleX(0.9722);transform-origin:0 0;">1178.08</div>
<div style="position:absolute;left:2307.0px;top:688.0px;white-space:nowrap;font-size:29.5px;line-height:29.5px;font-weight:700;color:#111;transform:scaleX(1.0352);transform-origin:0 0;">0</div>
<div style="position:absolute;left:1716.2px;top:771.5px;width:529.4px;height:50px;border-radius:25px;background:#f9bf22;"></div>
<svg style="position:absolute;left:1738.0px;top:779.0px;" width="32" height="34" viewBox="0 0 32 34"><path d="M5 24 Q8.5 21.5 8.5 15 Q8.5 5.5 16 5.5 Q23.5 5.5 23.5 15 Q23.5 21.5 27 24 Z" fill="none" stroke="#1a1a1a" stroke-width="2.1" stroke-linejoin="round"/><path d="M12.5 26 Q16 31.5 19.5 26" fill="none" stroke="#1a1a1a" stroke-width="2.1" stroke-linecap="round"/></svg>
<div style="position:absolute;left:1783.0px;top:788.2px;white-space:nowrap;font-size:17px;line-height:17px;font-weight:400;color:#1d1d1d;transform:scaleX(1.0021);transform-origin:0 0;">Please maintain a load of 1195.26 MW/Sec for max output.</div>
<div style="position:absolute;left:1529.6px;top:835.5px;width:921px;height:340px;border-radius:20px;background:#fff;"></div>
<div style="position:absolute;left:1539.5px;top:843.8px;width:901.5px;height:62px;border-radius:12px 12px 0 0;background:repeating-linear-gradient(90deg,rgba(255,255,255,0) 0 2px,rgba(255,255,255,0.35) 2px 3px),linear-gradient(180deg,#fdeecb 0%,#fef4de 50%,#ffffff 100%);"></div>
<svg style="position:absolute;left:1556.0px;top:860.0px;" width="34" height="30" viewBox="0 0 34 30"><g transform="translate(1 0) scale(0.85)"><path d="M24 9.6 A12 12 0 0 0 6 20.5 V22 Q6 24.8 9 24.8 H27 Q30 24.8 30 22 V20.5 A12 12 0 0 0 28.9 15.4" fill="none" stroke="#e0ad18" stroke-width="2.4" stroke-linecap="round" stroke-linejoin="round"/><path d="M20.6 12.3 A8.2 8.2 0 0 0 10.3 20.6" fill="none" stroke="#e0ad18" stroke-width="2.3" stroke-linecap="round"/><path d="M17.5 20.9 L28.4 9.7" stroke="#e0ad18" stroke-width="2.3" stroke-linecap="round"/></g></svg>
<div style="position:absolute;left:1597.0px;top:862.8px;white-space:nowrap;font-size:25px;line-height:25px;font-weight:400;color:#111;transform:scaleX(1.0075);transform-origin:0 0;-webkit-text-stroke:0.3px #111;">Meter Status</div>
<div style="position:absolute;left:1538.7px;top:908.0px;width:903.3px;height:252.0px;background:#eff1f3;border-radius:16px;"></div>
<div style="position:absolute;left:1613.0px;top:935.7px;white-space:nowrap;font-size:20px;line-height:20px;font-weight:700;color:#485466;transform:scaleX(0.9657);transform-origin:0 0;">Meter Name</div>
<div style="position:absolute;left:1853.7px;top:935.7px;white-space:nowrap;font-size:20px;line-height:20px;font-weight:700;color:#485466;transform:scaleX(0.9014);transform-origin:0 0;">Status</div>
<div style="position:absolute;left:2039.3px;top:935.7px;white-space:nowrap;font-size:20px;line-height:20px;font-weight:700;color:#485466;transform:scaleX(0.9132);transform-origin:0 0;">Last Synced</div>
<div style="position:absolute;left:2266.0px;top:935.7px;white-space:nowrap;font-size:20px;line-height:20px;font-weight:700;color:#485466;transform:scaleX(1.0449);transform-origin:0 0;">QTM (MW)</div>
<div style="position:absolute;left:1553.0px;top:969.5px;width:874.4px;height:190.5px;background:#fff;border-radius:12px 12px 0 0;"></div>
<div style="position:absolute;left:1553.0px;top:1023.7px;width:874.4px;height:1.3px;background:#e3e5e8;border-radius:0px;"></div>
<div style="position:absolute;left:1553.0px;top:1080.0px;width:874.4px;height:1.3px;background:#e3e5e8;border-radius:0px;"></div>
<div style="position:absolute;left:1650.5px;top:988.4px;white-space:nowrap;font-size:17.5px;line-height:17.5px;font-weight:400;color:#4a5568;transform:scaleX(1.0285);transform-origin:0 0;">FUT</div>
<div style="position:absolute;left:1838.7px;top:981.8px;width:85.5px;height:30px;border-radius:15px;background:#c9eedc;"></div>
<div style="position:absolute;left:1850.0px;top:992.2px;width:8px;height:8px;border-radius:4px;background:#12a150;"></div>
<div style="position:absolute;left:1863.0px;top:986.9px;white-space:nowrap;font-size:17.5px;line-height:17.5px;font-weight:700;color:#1a1a1a;transform:scaleX(0.9518);transform-origin:0 0;">Active</div>
<div style="position:absolute;left:2070.0px;top:988.4px;white-space:nowrap;font-size:17.5px;line-height:17.5px;font-weight:400;color:#4a5568;transform:scaleX(1.0010);transform-origin:0 0;">02sec</div>
<div style="position:absolute;left:1642.0px;top:1044.7px;white-space:nowrap;font-size:17.5px;line-height:17.5px;font-weight:400;color:#4a5568;transform:scaleX(0.9535);transform-origin:0 0;">GEN-1</div>
<div style="position:absolute;left:1838.7px;top:1038.0px;width:85.5px;height:30px;border-radius:15px;background:#c9eedc;"></div>
<div style="position:absolute;left:1850.0px;top:1048.5px;width:8px;height:8px;border-radius:4px;background:#12a150;"></div>
<div style="position:absolute;left:1863.0px;top:1043.2px;white-space:nowrap;font-size:17.5px;line-height:17.5px;font-weight:700;color:#1a1a1a;transform:scaleX(0.9518);transform-origin:0 0;">Active</div>
<div style="position:absolute;left:2070.0px;top:1044.7px;white-space:nowrap;font-size:17.5px;line-height:17.5px;font-weight:400;color:#4a5568;transform:scaleX(1.0010);transform-origin:0 0;">02sec</div>
<div style="position:absolute;left:1640.0px;top:1101.4px;white-space:nowrap;font-size:17.5px;line-height:17.5px;font-weight:400;color:#4a5568;transform:scaleX(1.0470);transform-origin:0 0;">GEN-2</div>
<div style="position:absolute;left:1838.7px;top:1094.8px;width:85.5px;height:30px;border-radius:15px;background:#c9eedc;"></div>
<div style="position:absolute;left:1850.0px;top:1105.2px;width:8px;height:8px;border-radius:4px;background:#12a150;"></div>
<div style="position:absolute;left:1863.0px;top:1099.9px;white-space:nowrap;font-size:17.5px;line-height:17.5px;font-weight:700;color:#1a1a1a;transform:scaleX(0.9518);transform-origin:0 0;">Active</div>
<div style="position:absolute;left:2070.0px;top:1101.4px;white-space:nowrap;font-size:17.5px;line-height:17.5px;font-weight:400;color:#4a5568;transform:scaleX(1.0010);transform-origin:0 0;">02sec</div>
<div style="position:absolute;left:2310.5px;top:988.4px;white-space:nowrap;font-size:17.5px;line-height:17.5px;font-weight:400;color:#111;transform:scaleX(0.9759);transform-origin:0 0;">0</div>
<div style="position:absolute;left:2267.5px;top:1039px;width:100px;height:29.75px;border-radius:15px;background:#f0c3c6;"></div>
<div style="position:absolute;left:2278.8px;top:1044.7px;white-space:nowrap;font-size:17.5px;line-height:17.5px;font-weight:400;color:#c0282d;transform:scaleX(1.0041);transform-origin:0 0;">626.65</div>
<svg style="position:absolute;left:2339.0px;top:1042.0px;" width="18" height="18" viewBox="0 0 18 18"><path d="M3 3 L14 14 M6 14.5 H14.5 V6" fill="none" stroke="#c0282d" stroke-width="2" stroke-linecap="round" stroke-linejoin="round"/></svg>
<div style="position:absolute;left:2270px;top:1095.75px;width:95px;height:29.25px;border-radius:15px;background:#cdeedd;"></div>
<div style="position:absolute;left:2280.0px;top:1101.4px;white-space:nowrap;font-size:17.5px;line-height:17.5px;font-weight:400;color:#111;transform:scaleX(0.9480);transform-origin:0 0;">620.18</div>
<svg style="position:absolute;left:2337.0px;top:1098.0px;" width="18" height="18" viewBox="0 0 18 18"><path d="M3 15 L14 4 M6 3.5 H14.5 V12" fill="none" stroke="#12a150" stroke-width="2" stroke-linecap="round" stroke-linejoin="round"/></svg>
<div style="position:absolute;left:550.0px;top:1141.0px;width:2010.0px;height:3.0px;background:#e6e9ee;border-radius:0px;"></div>
<div style="position:absolute;left:550px;top:1139.6px;width:2010px;height:1.6px;background:repeating-linear-gradient(90deg,#2233cc 0 5px,#dfe6ff 5px 7px,#3a48d0 7px 9px,#f4f6ff 9px 12px,#2a70d8 12px 16px,#eef2ff 16px 19px);"></div>
<div style="position:absolute;left:550.0px;top:1144.0px;width:2010.0px;height:78.0px;background:#000;border-radius:0px;"></div>
<div style="position:absolute;left:0;top:392px;width:551px;height:836px;border-radius:24px 34px 28px 28px;background:#fff;"></div>
<div style="position:absolute;left:29.5px;top:424.2px;width:490.5px;height:77.5px;background:#eef2f6;border-radius:20px 20px 0 0;"></div>
<div style="position:absolute;left:29.5px;top:517.4px;width:490.5px;height:75px;background:repeating-linear-gradient(90deg,rgba(255,255,255,0) 0 2px,rgba(255,255,255,0.35) 2px 3px),linear-gradient(180deg,#c9f5df 0%,#d7f7e8 45%,#effcf5 78%,#ffffff 100%);"></div>
<svg style="position:absolute;left:31.0px;top:535.0px;" width="48" height="48" viewBox="0 0 48 48"><circle cx="23" cy="24" r="22" fill="#d3ece0" fill-opacity="0.85"/><path d="M0.9 22.5 C1.38 23.23 2.73 26.65 3.8 26.9 C4.87 27.15 6.23 24.00 7.3 24 C8.37 24.00 9.30 27.32 10.2 26.9 C11.10 26.48 11.80 21.42 12.7 21.5 C13.60 21.58 14.47 27.98 15.6 27.4 C16.73 26.82 18.35 17.35 19.5 18 C20.65 18.65 21.43 30.30 22.5 31.3 C23.57 32.30 24.77 24.73 25.9 24 C27.03 23.27 28.15 28.22 29.3 26.9 C30.45 25.58 31.57 15.77 32.8 16.1 C34.03 16.43 35.32 27.67 36.7 28.9 C38.08 30.13 39.78 23.83 41.1 23.5 C42.42 23.17 43.70 26.73 44.6 26.9 C45.50 27.07 46.18 24.90 46.5 24.5" fill="none" stroke="#1e8f5a" stroke-width="2.4" stroke-linecap="round" stroke-linejoin="round"/></svg>
<div style="position:absolute;left:92.5px;top:542.7px;white-space:nowrap;font-size:31px;line-height:31px;font-weight:400;color:#111;transform:scaleX(1.0300);transform-origin:0 0;-webkit-text-stroke:0.4px #111;">Frequency Stats</div>
<div style="position:absolute;left:29.5px;top:607.0px;width:234.1px;height:78.2px;background:#0352d2;border-radius:13px;"></div>
<div style="position:absolute;left:279.6px;top:607.0px;width:237.8px;height:78.2px;background:#039651;border-radius:13px;"></div>
<div style="position:absolute;left:48.1px;top:622.9px;white-space:nowrap;font-size:49px;line-height:49px;font-weight:400;color:#fff;transform:scaleX(1.1327);transform-origin:0 0;-webkit-text-stroke:0.9px #fff;">49.92</div>
<div style="position:absolute;left:204.5px;top:647.7px;white-space:nowrap;font-size:30px;line-height:30px;font-weight:400;color:#fff;transform:scaleX(1.0580);transform-origin:0 0;-webkit-text-stroke:0.6px #fff;">Hz</div>
<div style="position:absolute;left:316.0px;top:622.9px;white-space:nowrap;font-size:49px;line-height:49px;font-weight:400;color:#fff;transform:scaleX(1.1250);transform-origin:0 0;-webkit-text-stroke:0.9px #fff;">49.5</div>
<div style="position:absolute;left:442.0px;top:647.7px;white-space:nowrap;font-size:30px;line-height:30px;font-weight:400;color:#fff;transform:scaleX(1.0635);transform-origin:0 0;-webkit-text-stroke:0.6px #fff;">Hz</div>
<div style="position:absolute;left:51.4px;top:706.5px;white-space:nowrap;font-size:20.5px;line-height:20.5px;font-weight:700;color:#454545;transform:scaleX(1.0201);transform-origin:0 0;">Current Frequency</div>
<div style="position:absolute;left:287.7px;top:706.5px;white-space:nowrap;font-size:20.5px;line-height:20.5px;font-weight:700;color:#454545;transform:scaleX(1.0098);transform-origin:0 0;">Forecasted Frequency</div>
<div style="position:absolute;left:29.5px;top:754.0px;width:490.7px;height:63.5px;background:#eff0f2;border-radius:0 13px 13px 0;"></div>
<div style="position:absolute;left:35.0px;top:776.6px;white-space:nowrap;font-size:20px;line-height:20px;font-weight:700;color:#333;transform:scaleX(1.0372);transform-origin:0 0;">Break Even Freq.</div>
<div style="position:absolute;left:246.8px;top:769.6px;white-space:nowrap;font-size:32px;line-height:32px;font-weight:400;color:#1a56c4;transform:scaleX(1.0778);transform-origin:0 0;">50 Hz</div>
<div style="position:absolute;left:29.6px;top:834.8px;width:490.3px;height:332.2px;background:#eff0f2;border-radius:0 13px 13px 0;"></div>
<svg style="position:absolute;left:34.5px;top:865.4px;" width="37.2" height="36.2" viewBox="0 0 37.2 36.2"><rect x="0" y="0" width="37.2" height="36.2" rx="7" fill="#b82228"/><g transform="scale(1.283,1.248)"><path d="M16.8 3.3 L6.5 15 L12 18.1 L11 25.6 L21.3 13.6 L15.8 10.5 Z" fill="none" stroke="#f4fff9" stroke-width="1.8" stroke-linejoin="round"/></g></svg>
<div style="position:absolute;left:84.9px;top:871.0px;white-space:nowrap;font-size:26px;line-height:26px;font-weight:400;color:#111;transform:scaleX(1.1096);transform-origin:0 0;-webkit-text-stroke:0.3px #111;">OI(+)/UI(-) MW</div>
<div style="position:absolute;left:34.5px;top:918.0px;width:474.9px;height:83.0px;background:#b3222a;border-radius:20px;"></div>
<div style="position:absolute;left:213.9px;top:936.4px;white-space:nowrap;font-size:46px;line-height:46px;font-weight:400;color:#fff;transform:scaleX(1.0977);transform-origin:0 0;-webkit-text-stroke:0.8px #fff;">-8.13</div>
<svg style="position:absolute;left:34.5px;top:1017.4px;" width="37.2" height="36.2" viewBox="0 0 37.2 36.2"><rect x="0" y="0" width="37.2" height="36.2" rx="7" fill="#b82228"/><g transform="scale(1.283,1.248)"><path d="M7.2 4.3 H22.3 M7.2 8.8 H22.3 M11 4.3 Q17.3 4.6 17.3 9.6 Q16.8 15.5 7.5 15.7 L17.5 24.6" fill="none" stroke="#fff" stroke-width="1.9" stroke-linecap="round" stroke-linejoin="round"/></g></svg>
<div style="position:absolute;left:84.9px;top:1023.5px;white-space:nowrap;font-size:25px;line-height:25px;font-weight:400;color:#111;transform:scaleX(1.0453);transform-origin:0 0;-webkit-text-stroke:0.3px #111;">Net DSM</div>
<div style="position:absolute;left:191.5px;top:1034.3px;white-space:nowrap;font-size:17px;line-height:17px;font-weight:400;color:#111;transform:scaleX(1.0320);transform-origin:0 0;">(Lakhs)</div>
<div style="position:absolute;left:34.5px;top:1070.0px;width:474.9px;height:82.3px;background:#b3222a;border-radius:20px;"></div>
<div style="position:absolute;left:171.0px;top:1088.8px;white-space:nowrap;font-size:46px;line-height:46px;font-weight:400;color:#fff;transform:scaleX(1.2979);transform-origin:0 0;-webkit-text-stroke:0.8px #fff;">-0.0043</div>
</div></body></html>
